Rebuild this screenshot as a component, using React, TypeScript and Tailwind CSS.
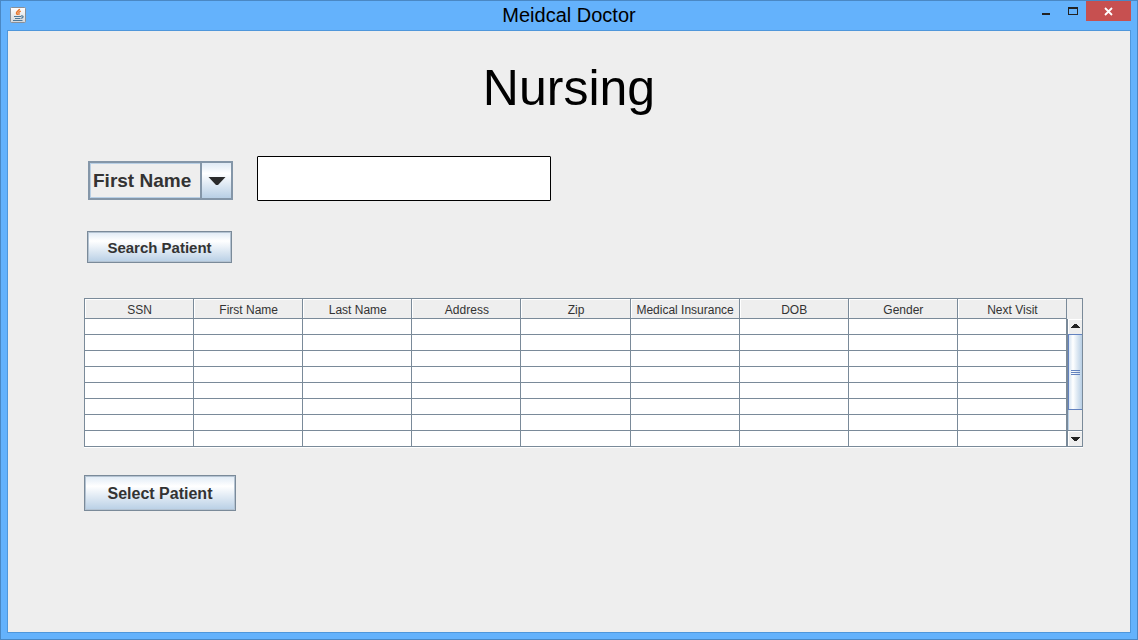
import { useState } from "react";

const columns = [
  "SSN",
  "First Name",
  "Last Name",
  "Address",
  "Zip",
  "Medical Insurance",
  "DOB",
  "Gender",
  "Next Visit",
];
const rows = [0, 1, 2, 3, 4, 5, 6, 7];

const metalButton =
  "block border border-[#7a8a99] bg-linear-to-b from-[#dfeaf5] via-white via-30% to-[#b8cfe5] pt-[2px] font-bold text-[#333333] shadow-[inset_0_0_0_1px_#b4c3d2]";

function JavaIcon() {
  return (
    <svg width="16" height="16" viewBox="0 0 16 16" aria-hidden="true" className="block">
      <defs>
        <linearGradient id="tile" x1="0" y1="0" x2="0" y2="1">
          <stop offset="0" stopColor="#ffffff" />
          <stop offset="1" stopColor="#d3d6da" />
        </linearGradient>
      </defs>
      <rect x="0.5" y="0.5" width="15" height="15" rx="1" fill="url(#tile)" stroke="#8a8f96" />
      <path d="M9.4 1.8C9.6 3.8 6.2 4.4 6.6 6C6.8 6.8 7.4 7.2 7.4 8" fill="none" stroke="#e8762c" strokeWidth="1.7" />
      <path d="M10.8 4.2C8.6 5 8.4 5.6 9 6.4C9.4 7 9 7.4 8.6 8" fill="none" stroke="#e8762c" strokeWidth="1.3" />
      <path d="M4 9.5H11M5 11.5H10.5M3 13.5H12.5" stroke="#4f7896" strokeWidth="1.2" />
      <path d="M11 9C13.8 8.4 13.8 10.6 11.2 11.4" fill="none" stroke="#4f7896" strokeWidth="1.2" />
    </svg>
  );
}

function TitleBar() {
  return (
    <header className="grid h-[29px] grid-cols-[1fr_auto_1fr] items-start">
      <div className="pt-[6px] pl-[9px]">
        <JavaIcon />
      </div>
      <div className="text-[20px] leading-[28px] text-black">Meidcal Doctor</div>
      <div className="flex justify-end pr-[6px]">
        <button type="button" aria-label="Minimize" className="flex h-5 w-[27px] items-center justify-center">
          <svg width="27" height="20" viewBox="0 0 27 20">
            <path d="M10 12h8v2h-8z" fill="#222" />
          </svg>
        </button>
        <button type="button" aria-label="Maximize" className="flex h-5 w-[27px] items-center justify-center">
          <svg width="27" height="20" viewBox="0 0 27 20">
            <path d="M9 6h10v8H9zM10 8v5h8V8z" fillRule="evenodd" fill="#222" />
          </svg>
        </button>
        <button type="button" aria-label="Close" className="flex h-5 w-[45px] items-center justify-center bg-[#c75050]">
          <svg width="45" height="20" viewBox="0 0 45 20">
            <path
              d="M19 7L26 14M26 7L19 14"
              fill="none"
              stroke="#fff"
              strokeWidth="1.8"
            />
          </svg>
        </button>
      </div>
    </header>
  );
}

function ScrollBar() {
  return (
    <div className="flex w-4 flex-col border-r border-[#7a8a99]">
      <div className="h-[21px] border-t border-[#7a8a99]" />
      <div className="flex flex-1 flex-col border-b border-l border-[#7a8a99]">
        <button type="button" aria-label="Scroll up" className="h-[15px] border-t border-l border-white">
          <svg width="13" height="14" viewBox="0 0 13 14" className="block">
            <path d="M5 4h3v1h1v1h1v1h1v1H2V7h1V6h1V5h1z" fill="#222" />
          </svg>
        </button>
        <div className="flex flex-1 flex-col border-b border-[#7a8a99] shadow-[inset_1px_0_0_#b8cfe5]">
          <div className="flex h-[76px] flex-col items-center justify-center gap-px border-y border-l border-[#6382bf] bg-linear-to-r from-[#d5e3f1] via-white via-30% to-[#b8cfe5]">
            <span className="h-px w-[9px] bg-[#6382bf]" />
            <span className="h-px w-[9px] bg-[#6382bf]" />
            <span className="h-px w-[9px] bg-[#6382bf]" />
          </div>
        </div>
        <button type="button" aria-label="Scroll down" className="h-[15px] border-t border-l border-white">
          <svg width="13" height="14" viewBox="0 0 13 14" className="block">
            <path d="M2 5h9v1h-1v1H9v1H8v1H5V8H4V7H3V6H2z" fill="#222" />
          </svg>
        </button>
      </div>
    </div>
  );
}

function PatientTable() {
  return (
    <div className="mt-[35px] flex shadow-[0_1px_0_white]">
      <div className="min-w-0 flex-1 border-l border-[#7a8a99]">
        <table className="w-full table-fixed border-separate border-spacing-0 bg-white">
          <thead>
            <tr>
              {columns.map((name) => (
                <th
                  key={name}
                  scope="col"
                  className="h-[21px] border-y border-r border-[#7a8a99] bg-[#eeeeee] p-0 pt-[3px] pl-px text-center text-[12px] leading-4 font-normal whitespace-nowrap text-[#333333] shadow-[inset_1px_1px_0_white]"
                >
                  {name}
                </th>
              ))}
            </tr>
          </thead>
          <tbody>
            {rows.map((row) => (
              <tr key={row}>
                {columns.map((name) => (
                  <td key={name} className="h-4 border-r border-b border-[#7a8a99] p-0" />
                ))}
              </tr>
            ))}
          </tbody>
        </table>
      </div>
      <ScrollBar />
    </div>
  );
}

export default function App() {
  const [field, setField] = useState("First Name");
  const [query, setQuery] = useState("");

  return (
    <div className="flex min-h-screen flex-col border border-[#4a88c4] bg-[#64b2fc] font-['Liberation_Sans',Arial,sans-serif]">
      <TitleBar />
      <main className="mx-[6px] mb-[6px] flex-1 border border-[#4f97db] bg-[#eeeeee] pt-[29px] pr-[47px] pb-8 pl-[76px]">
        <h1 className="-ml-[29px] text-center text-[50px] leading-[56px] text-black">Nursing</h1>

        <form onSubmit={(event) => event.preventDefault()}>
          <div className="mt-10 flex items-end gap-6 pl-1">
            <div className="relative mb-px">
              <select
                aria-label="Search field"
                value={field}
                onChange={(event) => setField(event.target.value)}
                className="block h-[39px] w-[145px] appearance-none border-2 border-[#8496a8] bg-[#eeeeee] pr-9 pl-[3px] text-[19px] leading-[35px] font-bold text-[#333333] shadow-[inset_0_0_0_1px_#b8cfe5] outline-none"
              >
                {columns.map((name) => (
                  <option key={name}>{name}</option>
                ))}
              </select>
              <span className="pointer-events-none absolute inset-y-0 right-0 flex w-[33px] items-center justify-center border-2 border-[#8496a8] bg-linear-to-b from-[#dfeaf5] via-white via-30% to-[#b8cfe5]">
                <svg width="18" height="10" viewBox="0 0 18 10" aria-hidden="true">
                  <path d="M0.5 1H17.5L10 9H8z" fill="#2b2b2b" />
                </svg>
              </span>
            </div>
            <input
              type="text"
              aria-label="Search text"
              value={query}
              onChange={(event) => setQuery(event.target.value)}
              className="h-[45px] w-[294px] rounded-[1px] border border-black bg-white px-2 text-[19px] text-black outline-none"
            />
          </div>
          <button type="submit" className={`${metalButton} mt-[30px] ml-[3px] h-8 w-[145px] text-[15px] leading-7`}>
            Search Patient
          </button>
        </form>

        <PatientTable />

        <button type="button" className={`${metalButton} mt-7 h-9 w-[152px] text-[16px] leading-8`}>
          Select Patient
        </button>
      </main>
    </div>
  );
}
